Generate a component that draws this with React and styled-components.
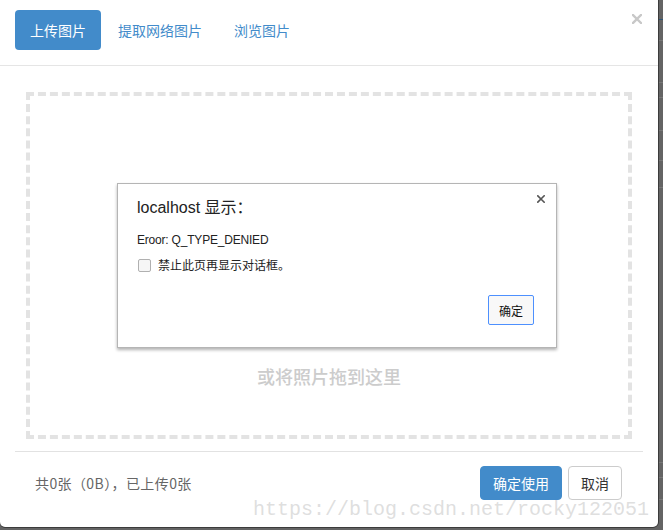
import React from "react";
import styled, { createGlobalStyle } from "styled-components";

const Global = createGlobalStyle`
  html, body {
    margin: 0;
    padding: 0;
  }
  body {
    width: 663px;
    height: 530px;
    overflow: hidden;
    background-color: #646464;
    background-image:
      linear-gradient(#2f5373, #2f5373),
      linear-gradient(#777, #777),
      linear-gradient(#777, #777),
      linear-gradient(#777, #777),
      linear-gradient(#777, #777),
      linear-gradient(#777, #777),
      linear-gradient(#777, #777),
      linear-gradient(#777, #777),
      linear-gradient(#777, #777),
      linear-gradient(#777, #777);
    background-repeat: no-repeat;
    background-size: 100% 1px;
    background-position:
      0 19px, 0 40px, 0 82px, 0 97px, 0 130px, 0 160px, 0 187px,
      0 462px, 0 477px, 0 499px;
    font-family: "Liberation Sans", "Noto Sans CJK SC", sans-serif;
  }
`;

const Modal = styled.div`
  position: relative;
  width: 658px;
  height: 527px;
  background: #fff;
  border-radius: 0 0 5px 5px;
  box-shadow: 1px 0 0 #3c3c3c, 0 1px 0 #3c3c3c;
  display: flex;
  flex-direction: column;
  font-family: "Liberation Sans", "Noto Sans CJK SC", sans-serif;
`;

const Header = styled.div`
  display: flex;
  align-items: center;
  padding: 10px 15px 15px;
  border-bottom: 1px solid #e5e5e5;
`;

const Tab = styled.div`
  height: 40px;
  padding: 0 15px;
  margin-right: 2px;
  display: flex;
  align-items: center;
  font-size: 14px;
  border-radius: 4px;
  color: ${(p) => (p.$active ? "#fff" : "#428bca")};
  background: ${(p) => (p.$active ? "#428bca" : "transparent")};
  font-family: "Noto Sans CJK SC", sans-serif;
`;

const CloseBtn = styled.div`
  position: absolute;
  top: 14px;
  right: 16px;
  width: 10px;
  height: 10px;
  display: flex;
`;

const Body = styled.div`
  padding: 26px 26px 0;
`;

const DropZone = styled.div`
  border: 4px dashed #e3e3e3;
  display: flex;
  flex-direction: column;
  justify-content: flex-end;
  align-items: center;
  padding-bottom: 47px;
  box-sizing: content-box;
  height: 292px;
`;

const DropText = styled.div`
  font-size: 18px;
  line-height: 24px;
  color: #cccccc;
  font-family: "Noto Sans CJK SC", sans-serif;
  font-weight: 500;
`;

const Footer = styled.div`
  margin: 12px 15px 0;
  border-top: 1px solid #e2e2e2;
  padding: 14px 21px 0 20px;
  display: flex;
  align-items: center;
  justify-content: space-between;
`;

const Info = styled.div`
  font-size: 14px;
  color: #666;
  letter-spacing: 0.4px;
  margin-top: -1px;
  font-family: "Noto Sans CJK SC", sans-serif;
`;

const Buttons = styled.div`
  display: flex;
  gap: 6px;
`;

const Button = styled.div`
  height: 34px;
  box-sizing: border-box;
  padding: 0 12px;
  display: flex;
  align-items: center;
  font-size: 14px;
  border-radius: 4px;
  font-family: "Noto Sans CJK SC", sans-serif;
  color: ${(p) => (p.$primary ? "#fff" : "#333")};
  background: ${(p) => (p.$primary ? "#428bca" : "#fff")};
  border: 1px solid ${(p) => (p.$primary ? "#428bca" : "#ccc")};
`;

const Watermark = styled.div`
  position: absolute;
  left: 253px;
  top: 497px;
  font-family: "Liberation Mono", monospace;
  font-size: 20px;
  line-height: 26px;
  color: rgba(195, 195, 195, 0.55);
  white-space: nowrap;
  pointer-events: none;
`;

const Alert = styled.div`
  position: absolute;
  left: 117px;
  top: 183px;
  width: 440px;
  height: 165px;
  box-sizing: border-box;
  background: #fff;
  border: 1px solid #b5b5b5;
  box-shadow: 0 2px 3px rgba(0, 0, 0, 0.3);
  padding: 13px 22px 0 19px;
  display: flex;
  flex-direction: column;
`;

const AlertClose = styled.div`
  position: absolute;
  top: 11px;
  right: 11px;
  width: 8px;
  height: 8px;
  display: flex;
`;

const AlertTitle = styled.div`
  font-size: 16px;
  line-height: 22px;
  color: #222;
  font-family: "Liberation Sans", "Noto Sans CJK SC", sans-serif;
`;

const AlertMessage = styled.div`
  margin-top: 13px;
  font-size: 12px;
  line-height: 16px;
  letter-spacing: -0.2px;
  color: #222;
`;

const CheckRow = styled.label`
  margin-top: 9px;
  display: flex;
  align-items: center;
  gap: 7px;
  font-size: 12px;
  line-height: 16px;
  color: #222;
  font-family: "Noto Sans CJK SC", sans-serif;
`;

const Check = styled.span`
  width: 13px;
  height: 13px;
  box-sizing: border-box;
  margin-left: 1px;
  border: 1px solid #b0b0b0;
  border-radius: 2px;
  background: #f6f6f6;
`;

const AlertActions = styled.div`
  margin-top: auto;
  margin-bottom: 22px;
  display: flex;
  justify-content: flex-end;
`;

const OkButton = styled.div`
  width: 46px;
  height: 30px;
  box-sizing: border-box;
  border: 1px solid #4d90fe;
  border-radius: 2px;
  background: #f8f8f8;
  display: flex;
  align-items: center;
  justify-content: center;
  font-size: 12px;
  color: #111;
  font-family: "Noto Sans CJK SC", sans-serif;
`;

const XIcon = ({ size, color, width }) => (
  <svg width={size} height={size} viewBox="0 0 10 10">
    <path d="M1 1 L9 9 M9 1 L1 9" stroke={color} strokeWidth={width} strokeLinecap="square" />
  </svg>
);

export default function App() {
  return (
    <>
      <Global />
      <Modal>
        <Header>
          <Tab $active>上传图片</Tab>
          <Tab>提取网络图片</Tab>
          <Tab>浏览图片</Tab>
        </Header>
        <CloseBtn>
          <XIcon size={10} color="#c8c8c8" width={2.4} />
        </CloseBtn>
        <Body>
          <DropZone>
            <DropText>或将照片拖到这里</DropText>
          </DropZone>
        </Body>
        <Footer>
          <Info>共0张（0B），已上传0张</Info>
          <Buttons>
            <Button $primary>确定使用</Button>
            <Button>取消</Button>
          </Buttons>
        </Footer>
        <Watermark>https://blog.csdn.net/rocky122051</Watermark>
        <Alert>
          <AlertClose>
            <XIcon size={8} color="#555" width={2} />
          </AlertClose>
          <AlertTitle>localhost 显示：</AlertTitle>
          <AlertMessage>Eroor: Q_TYPE_DENIED</AlertMessage>
          <CheckRow>
            <Check />
            禁止此页再显示对话框。
          </CheckRow>
          <AlertActions>
            <OkButton>确定</OkButton>
          </AlertActions>
        </Alert>
      </Modal>
    </>
  );
}
